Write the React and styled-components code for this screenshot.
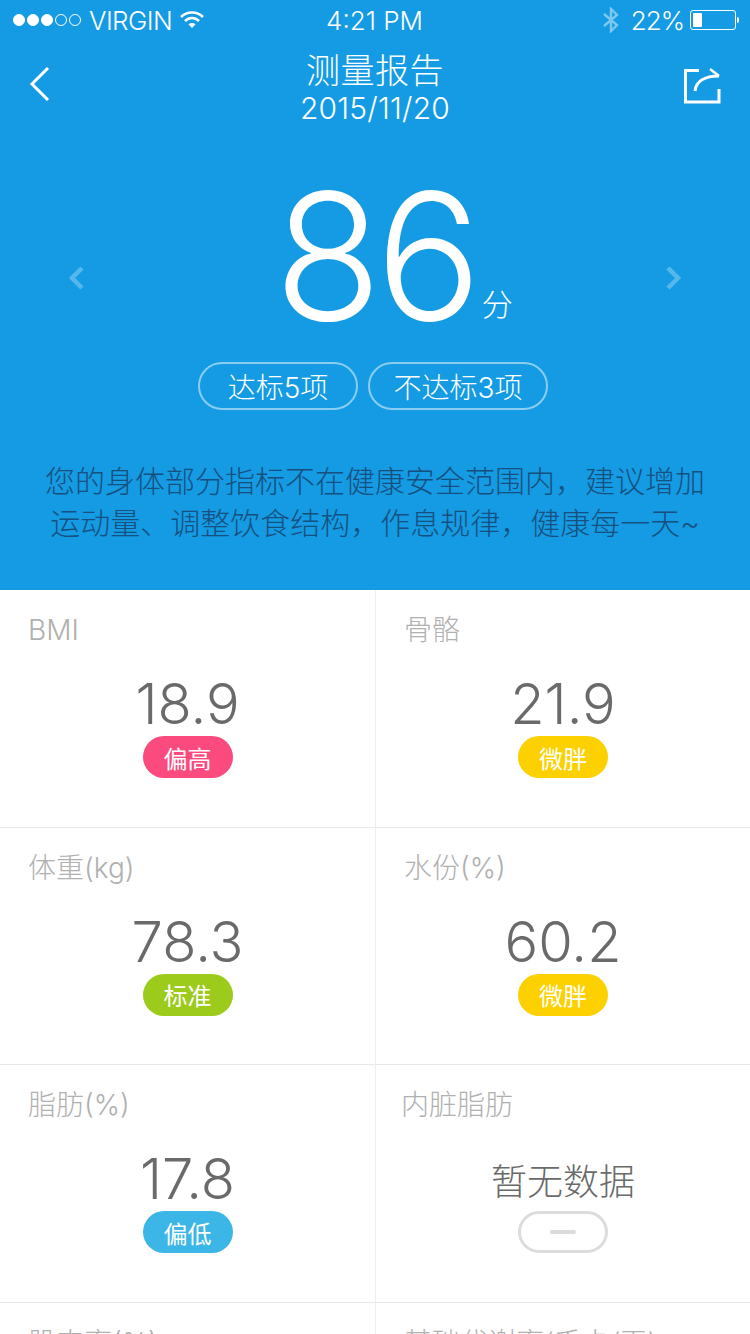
import React from "react";
import styled, { createGlobalStyle } from "styled-components";

const FONT = `"Inter", "Noto Sans CJK SC", "Noto Sans", sans-serif`;

const Global = createGlobalStyle`
  html, body { margin: 0; padding: 0; background: #fff; }
  body { width: 750px; height: 1334px; overflow: hidden; font-family: ${FONT}; }
  * { box-sizing: border-box; }
`;

const Page = styled.div`
  width: 750px;
  height: 1334px;
  overflow: hidden;
  background: #fff;
`;

const Hero = styled.header`
  height: 590px;
  background: #149be3;
  color: #fff;
  display: flex;
  flex-direction: column;
`;

const StatusBar = styled.div`
  height: 40px;
  padding: 0 14px 0 13px;
  display: grid;
  grid-template-columns: 1fr auto 1fr;
  align-items: center;
  font-size: 26px;
  font-weight: 300;
`;

const StatusSide = styled.div`
  display: flex;
  align-items: center;
  gap: ${p => p.$gap || 8}px;
  justify-content: ${p => (p.$end ? "flex-end" : "flex-start")};
`;

const Carrier = styled.span`
  letter-spacing: -0.6px;
`;

const Percent = styled.span`
  letter-spacing: -1px;
`;

const Dots = styled.div`
  display: flex;
  gap: 2px;
`;

const Dot = styled.span`
  width: 12px;
  height: 12px;
  border-radius: 50%;
  border: 1px solid #fff;
  background: ${p => (p.$on ? "#fff" : "transparent")};
`;

const Battery = styled.div`
  width: 46px;
  height: 20px;
  border: 1px solid #fff;
  border-radius: 3px;
  padding: 2px;
  display: flex;
  position: relative;
  &::after {
    content: "";
    position: absolute;
    right: -4px;
    top: 6px;
    width: 2px;
    height: 6px;
    background: #fff;
    border-radius: 0 2px 2px 0;
  }
`;

const BatteryFill = styled.span`
  width: 9px;
  background: #fff;
  border-radius: 1px;
`;

const BluetoothIcon = styled.svg`
  margin-right: 5px;
`;

const NavBar = styled.div`
  height: 88px;
  padding: 0 29px;
  display: grid;
  grid-template-columns: 60px 1fr 60px;
  align-items: center;
`;

const NavIcon = styled.svg`
  display: block;
  justify-self: ${p => (p.$end ? "end" : "start")};
`;

const NavTitle = styled.div`
  text-align: center;
  padding-top: 3px;
`;

const TitleMain = styled.div`
  font-size: 34px;
  line-height: 44px;
  font-weight: 300;
  letter-spacing: 0.5px;
`;

const TitleDate = styled.div`
  font-size: 30px;
  line-height: 30px;
  font-weight: 300;
  letter-spacing: 0.2px;
`;

const ScoreRow = styled.div`
  height: 214px;
  padding: 0 69px;
  display: flex;
  align-items: flex-start;
  justify-content: space-between;
`;

const ScoreChevron = styled.svg`
  margin-top: 138px;
`;

const ScoreCenter = styled.div`
  position: relative;
  margin-top: 48px;
`;

const ScoreValue = styled.div`
  font-size: 176px;
  line-height: 160px;
  font-weight: 300;
  letter-spacing: -6px;
`;

const ScoreUnit = styled.span`
  position: absolute;
  left: 100%;
  margin-left: 6px;
  top: 111px;
  font-size: 31px;
  line-height: 36px;
  font-weight: 300;
`;

const Pills = styled.div`
  margin-top: 20px;
  padding-left: 198px;
  display: flex;
  gap: 10px;
`;

const Pill = styled.div`
  width: ${p => p.$w}px;
  height: 48px;
  border: 2px solid rgba(255, 255, 255, 0.5);
  border-radius: 24px;
  display: flex;
  align-items: center;
  justify-content: center;
  font-size: 28px;
  font-weight: 300;
`;

const Advice = styled.p`
  margin: 50px 0 0;
  padding: 0 30px;
  text-align: center;
  font-size: 30px;
  line-height: 42px;
  font-weight: 300;
  color: #17507e;
`;

const Grid = styled.section`
  display: grid;
  grid-template-columns: 376px 374px;
  grid-auto-rows: 237.5px;
`;

const Cell = styled.div`
  border-bottom: 1px solid #e8e8e8;
  border-right: ${p => (p.$left ? "1px solid #eeeeee" : "none")};
  padding: 22px 28px 0;
  display: flex;
  flex-direction: column;
`;

const Label = styled.div`
  font-size: 28px;
  line-height: 36px;
  font-weight: 300;
  color: #b0b0b0;
  margin-left: ${p => p.$shift || 0}px;
`;

const Value = styled.div`
  margin-top: 23px;
  text-align: center;
  font-size: 56px;
  line-height: 66px;
  font-weight: 300;
  color: #6a6a6a;
`;

const NoData = styled(Value)`
  margin-top: 26px;
  font-size: 36px;
`;

const Badge = styled.div`
  align-self: center;
  width: 90px;
  height: 42px;
  margin-top: -1px;
  border-radius: 21px;
  background: ${p => p.$color};
  color: #fff;
  display: flex;
  align-items: center;
  justify-content: center;
  font-size: 24px;
  font-weight: 400;
`;

const EmptyBadge = styled(Badge)`
  margin-top: -4px;
  background: #fff;
  border: 3px solid #dcdcdc;
  &::before {
    content: "";
    width: 26px;
    height: 4px;
    border-radius: 2px;
    background: #dcdcdc;
  }
`;

const metrics = [
  { label: "BMI", value: "18.9", tag: "偏高", color: "#fb4a7d" },
  { label: "骨骼", value: "21.9", tag: "微胖", color: "#fdd000" },
  { label: "体重(kg)", value: "78.3", tag: "标准", color: "#9ccb1b" },
  { label: "水份(%)", value: "60.2", tag: "微胖", color: "#fdd000" },
  { label: "脂肪(%)", value: "17.8", tag: "偏低", color: "#3cb6e6" },
  { label: "内脏脂肪", empty: true, shift: -3 },
  { label: "肌肉率(%)" },
  { label: "基础代谢率(千卡/天)" },
];

const Chevron = ({ dir }) => (
  <ScoreChevron width="16" height="24" viewBox="0 0 16 24" fill="none">
    <path
      d={dir === "left" ? "M13 2 L3 12 L13 22" : "M3 2 L13 12 L3 22"}
      stroke="rgba(255,255,255,0.28)"
      strokeWidth="4.5"
    />
  </ScoreChevron>
);

export default function App() {
  return (
    <Page>
      <Global />
      <Hero>
        <StatusBar>
          <StatusSide>
            <Dots>
              {[1, 1, 1, 0, 0].map((on, i) => (
                <Dot key={i} $on={!!on} />
              ))}
            </Dots>
            <Carrier>VIRGIN</Carrier>
            <svg width="24" height="18" viewBox="0 0 24 18" fill="none" stroke="#fff" strokeWidth="2.6">
              <path d="M1 6 C7 0 17 0 23 6" />
              <path d="M5 10 C9 6 15 6 19 10" />
              <path d="M12 17 L8.5 13.2 C10.5 11.6 13.5 11.6 15.5 13.2 Z" fill="#fff" stroke="none" />
            </svg>
          </StatusSide>
          <span>4:21 PM</span>
          <StatusSide $end $gap={6}>
            <BluetoothIcon width="18" height="26" viewBox="0 0 18 26" fill="none" stroke="rgba(255,255,255,0.45)" strokeWidth="2.4">
              <path d="M2 7 L15 18 L9 24 V2 L15 8 L2 19" />
            </BluetoothIcon>
            <Percent>22%</Percent>
            <Battery>
              <BatteryFill />
            </Battery>
          </StatusSide>
        </StatusBar>
        <NavBar>
          <NavIcon width="22" height="36" viewBox="0 0 22 36" fill="none" stroke="#fff" strokeWidth="3">
            <path d="M19 2 L3 18 L19 34" />
          </NavIcon>
          <NavTitle>
            <TitleMain>测量报告</TitleMain>
            <TitleDate>2015/11/20</TitleDate>
          </NavTitle>
          <NavIcon $end width="38" height="40" viewBox="0 0 38 40" fill="none" stroke="#fff" strokeWidth="3">
            <path d="M16 6.5 H2.5 V38 H36 V25" />
            <path d="M12 27 C13 18 21 12 36 12" />
            <path d="M27 5 L36 12" strokeWidth="2.5" />
          </NavIcon>
        </NavBar>
        <ScoreRow>
          <Chevron dir="left" />
          <ScoreCenter>
            <ScoreValue>86</ScoreValue>
            <ScoreUnit>分</ScoreUnit>
          </ScoreCenter>
          <Chevron dir="right" />
        </ScoreRow>
        <Pills>
          <Pill $w={160}>达标5项</Pill>
          <Pill $w={180}>不达标3项</Pill>
        </Pills>
        <Advice>
          您的身体部分指标不在健康安全范围内，建议增加
          <br />
          运动量、调整饮食结构，作息规律，健康每一天~
        </Advice>
      </Hero>
      <Grid>
        {metrics.map((m, i) => (
          <Cell key={m.label} $left={i % 2 === 0}>
            <Label $shift={m.shift}>{m.label}</Label>
            {m.value && <Value>{m.value}</Value>}
            {m.tag && <Badge $color={m.color}>{m.tag}</Badge>}
            {m.empty && (
              <>
                <NoData>暂无数据</NoData>
                <EmptyBadge />
              </>
            )}
          </Cell>
        ))}
      </Grid>
    </Page>
  );
}
